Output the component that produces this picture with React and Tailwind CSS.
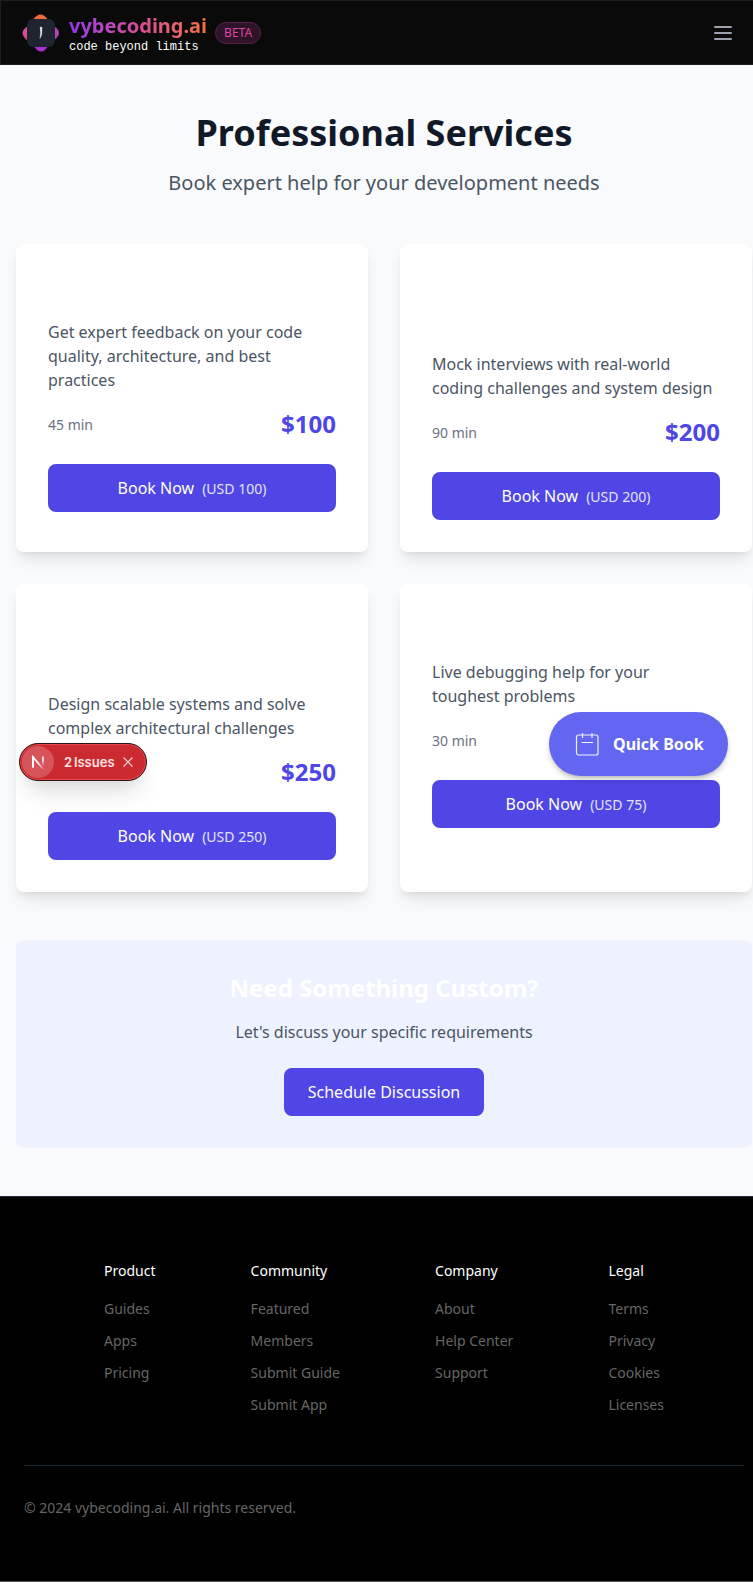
const services = [
  { id: 'review', titleLines: 1, text: 'Get expert feedback on your code quality, architecture, and best practices', time: '45 min', price: '$100', usd: 100 },
  { id: 'interview', titleLines: 2, text: 'Mock interviews with real-world coding challenges and system design', time: '90 min', price: '$200', usd: 200 },
  { id: 'design', titleLines: 2, text: 'Design scalable systems and solve complex architectural challenges', time: '', price: '$250', usd: 250 },
  { id: 'debug', titleLines: 1, text: 'Live debugging help for your toughest problems', time: '30 min', price: '', usd: 75 },
];

const footerColumns = [
  { title: 'Product', links: ['Guides', 'Apps', 'Pricing'] },
  { title: 'Community', links: ['Featured', 'Members', 'Submit Guide', 'Submit App'] },
  { title: 'Company', links: ['About', 'Help Center', 'Support'] },
  { title: 'Legal', links: ['Terms', 'Privacy', 'Cookies', 'Licenses'] },
];

function Logo() {
  return (
    <svg width="38" height="38" viewBox="0 0 38 38" className="shrink-0">
      <path d="M11 6 Q14.5 0.5 18.5 0.5 Q22.5 0.5 26 6Z" fill="#f0683e" />
      <path d="M12 32 Q15 37.5 19 37.5 Q23 37.5 26 32Z" fill="#a92fd0" />
      <path d="M6 12 Q0.5 15.500 0.500 19 Q0.500 22.500 6 27Z" fill="#e2489a" />
      <path d="M32 12 Q37 15.500 37 19 Q37 22.500 32 26Z" fill="#b445ae" />
      <rect x="5" y="5" width="28" height="28" rx="6" fill="#1f2530" />
      <path d="M18.200 13 L20 13.300 L19.700 20.500 L17.900 24.500 L18.600 19Z" fill="#fff" stroke="#fff" strokeWidth="0.300" />
    </svg>
  );
}

function Header() {
  return (
    <header className="flex h-[65px] w-[753px] items-center justify-between border border-r-0 border-[#1d1e20] bg-[#0a0a0a] pr-[20px] pl-[21px]">
      <div className="flex items-center">
        <Logo />
        <div className="ml-[9px] flex flex-col pt-[3px]">
          <span className="bg-linear-to-r from-[#9333ea] via-[#db4a98] to-[#f0703a] bg-clip-text text-xl leading-[25px] font-bold text-transparent">
            vybecoding.ai
          </span>
          <span className="mt-px font-['Liberation_Mono',monospace] text-xs leading-[17px] text-white">code beyond limits</span>
        </div>
        <span className="ml-2 flex h-[22px] items-center rounded-full border border-[#55204a] bg-[#2f1429] px-2 text-xs text-[#d946a0]">
          BETA
        </span>
      </div>
      <svg width="20" height="20" viewBox="0 0 20 20" className="shrink-0" fill="none" stroke="#9ca3af" strokeWidth="2" strokeLinecap="round">
        <path d="M2 4h16M2 10h16M2 16h16" />
      </svg>
    </header>
  );
}

function ServiceCard({ service }) {
  return (
    <article className="rounded-lg bg-white p-8 shadow-lg">
      <div className={service.titleLines === 2 ? 'mb-3 h-16' : 'mb-3 h-8'} />
      <p className="mb-4 text-base text-[#4b5563]">{service.text}</p>
      <div className="mb-6 flex h-8 items-center justify-between">
        <span className="pt-0.5 text-sm text-[#6b7280]">{service.time}</span>
        <span className="text-2xl font-bold text-[#4f46e5]">{service.price}</span>
      </div>
      <button className="block h-12 w-full rounded-lg bg-[#4f46e5] text-base text-white">
        Book Now
        <span className="ml-2 text-sm text-[#e5e3fb]">(USD {service.usd})</span>
      </button>
    </article>
  );
}

function Footer() {
  return (
    <footer className="h-[385px] border-t border-[#1f2937] bg-black px-6 pt-16 text-sm">
      <div className="flex justify-between px-20">
        {footerColumns.map((column) => (
          <div key={column.title}>
            <h3 className="mb-4 leading-5 text-white">{column.title}</h3>
            <ul className="space-y-2">
              {column.links.map((link) => (
                <li key={link} className="h-6 leading-6 text-[#666666]">{link}</li>
              ))}
            </ul>
          </div>
        ))}
      </div>
      <div className="mt-12 border-t border-[#1f2937] pt-8 leading-5 text-[#666666]">
        © 2024 vybecoding.ai. All rights reserved.
      </div>
    </footer>
  );
}

function IssuesBadge() {
  return (
    <div className="absolute top-[743px] left-[19px] flex h-[38px] w-[127.5px] items-center rounded-full border border-[#2a1414] bg-[#ca2a30] pl-[2px] font-['Inter',sans-serif] shadow-[inset_0_0_0_1px_#e5484d,0_16px_24px_-8px_rgba(0,0,0,0.16),0_4px_8px_rgba(0,0,0,0.04)]">
      <svg width="32" height="32" viewBox="0 0 32 32" fill="none" className="shrink-0">
        <defs>
          <linearGradient id="nextStem" x1="0" y1="10" x2="0" y2="20" gradientUnits="userSpaceOnUse">
            <stop offset="0.4" stopColor="#fff" />
            <stop offset="1" stopColor="#fff" stopOpacity="0" />
          </linearGradient>
          <linearGradient id="nextDiagonal" x1="17" y1="16" x2="22" y2="23" gradientUnits="userSpaceOnUse">
            <stop stopColor="#fff" />
            <stop offset="1" stopColor="#fff" stopOpacity="0.1" />
          </linearGradient>
        </defs>
        <circle cx="16" cy="16" r="16" fill="#d7555a" />
        <path d="M11 21.500V11L21.500 23.500" stroke="url(#nextDiagonal)" strokeWidth="1.700" />
        <path d="M11 21.500V10.500" stroke="#fff" strokeWidth="1.700" />
        <path d="M21 10.500V20" stroke="url(#nextStem)" strokeWidth="1.500" />
      </svg>
      <span className="ml-[10px] pt-px text-[13px] font-semibold [word-spacing:-1.5px] whitespace-nowrap text-[#fde3e3]">2 Issues</span>
      <svg width="10" height="10" viewBox="0 0 10 10" className="absolute right-[13px]" stroke="#f8d2d3" strokeWidth="1.200">
        <path d="M0.500 0.500L9.500 9.500M9.500 0.500L0.500 9.500" />
      </svg>
    </div>
  );
}

function QuickBook() {
  return (
    <button className="absolute top-[712px] left-[548.5px] flex h-16 w-[179.5px] items-center rounded-full bg-[#6366f1] pl-[26px] text-base font-bold text-white shadow-[0_4px_6px_-1px_rgba(0,0,0,0.2),0_2px_4px_-2px_rgba(0,0,0,0.2)]">
      <svg width="24" height="24" viewBox="0 0 24 24" fill="none" stroke="#f1f1fe" strokeWidth="1.200" className="shrink-0">
        <rect x="1.500" y="3" width="21.500" height="20" rx="2" />
        <path d="M7.500 1v5M17 1v5M6.500 10.500h11.500" />
      </svg>
      <span className="ml-[14.5px] whitespace-nowrap">Quick Book</span>
    </button>
  );
}

export default function App() {
  return (
    <div className="relative h-[1582px] w-[753px] overflow-hidden bg-[#f9fafb] font-['Noto_Sans',sans-serif]">
      <Header />
      <div className="w-[768px]">
        <main className="px-4 pt-12 pb-12">
          <h1 className="mb-4 text-center text-4xl font-bold text-[#111827]">Professional Services</h1>
          <p className="mb-[47px] text-center text-xl text-[#4b5563]">Book expert help for your development needs</p>
          <div className="grid grid-cols-2 gap-8">
            {services.map((service) => (
              <ServiceCard key={service.id} service={service} />
            ))}
          </div>
          <section className="mt-12 flex flex-col items-center rounded-lg bg-[#eef2ff] p-8">
            <h2 className="mb-4 text-2xl font-bold text-white">Need Something Custom?</h2>
            <p className="mb-6 text-[#4b5563]">Let's discuss your specific requirements</p>
            <button className="h-12 rounded-lg bg-[#4f46e5] px-6 text-white">Schedule Discussion</button>
          </section>
        </main>
        <Footer />
        <div className="h-px bg-[#5c5c5c]" />
      </div>
      <IssuesBadge />
      <QuickBook />
    </div>
  );
}
